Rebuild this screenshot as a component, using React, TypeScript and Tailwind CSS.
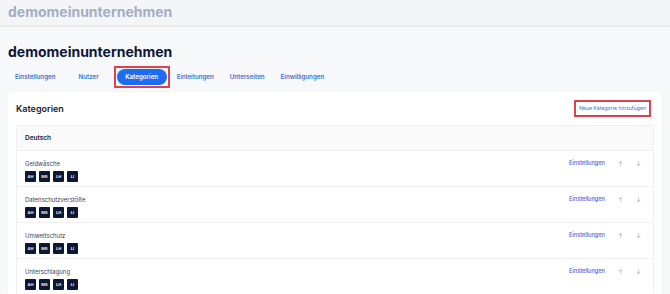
import React from "react";

const rows = ["Geldwäsche", "Datenschutzverstöße", "Umweltschutz", "Unterschlagung"];
const badges = ["AH", "MS", "LH", "LI"];

function Tab({ label, className }: { label: string; className: string }) {
  return <div className={`text-[6.2px] leading-none font-semibold text-[#3a73d6] whitespace-nowrap ${className}`}>{label}</div>;
}

export default function App() {
  return (
    <div className="w-[670px] h-[294px] overflow-hidden bg-[#f7f8fa] font-['Inter',sans-serif]">
      <div className="h-[27px] bg-[#f4f5f7] border-b-2 border-[#e8eaed] flex items-center px-[8px] pb-[2px]">
        <span className="text-[14px] font-bold text-[#a3aec0] leading-none">demomeinunternehmen</span>
      </div>
      <div className="px-[8px] pt-[16px]">
        <h1 className="text-[14px] font-bold text-[#0d1634] leading-[18px]">demomeinunternehmen</h1>
        <div className="flex items-center mt-[5px] h-[22px]">
          <Tab label="Einstellungen" className="ml-[7px]" />
          <Tab label="Nutzer" className="ml-[23px]" />
          <div className="ml-[15px] border-2 border-[#e0424d] px-[1px] py-[1px] h-[22px] flex items-center">
            <div className="bg-[#1d6cf2] text-white rounded-full h-[16px] w-[50px] flex items-center justify-center text-[6.2px] leading-none font-semibold">
              Kategorien
            </div>
          </div>
          <Tab label="Einleitungen" className="ml-[7px]" />
          <Tab label="Unterseiten" className="ml-[16px]" />
          <Tab label="Einwilligungen" className="ml-[16px]" />
        </div>
        <div className="mt-[4px] bg-white rounded-[4px] shadow-[0_0_2px_rgba(0,0,0,0.06)] px-[8px] pt-[8px]">
          <div className="flex items-center justify-between h-[17px]">
            <span className="text-[9px] leading-none font-semibold text-[#1b2232]">Kategorien</span>
            <div className="border-2 border-[#e0424d] h-[17px] w-[77px] flex items-center justify-center mr-[3px]">
              <span className="text-[5.2px] leading-none text-[#3a73d6] whitespace-nowrap">Neue Kategorie hinzufügen</span>
            </div>
          </div>
          <div className="mt-[8px] border border-[#eef0f2] rounded-[3px]">
            <div className="h-[25px] bg-[#fafafa] border-b border-[#eef0f2] flex items-center px-[8px]">
              <span className="text-[6.5px] leading-none font-semibold text-[#1b2232]">Deutsch</span>
            </div>
            {rows.map((r) => (
              <div key={r} className="h-[36px] border-b border-[#eef0f2] flex items-start justify-between px-[8px] pt-[9px]">
                <div className="flex flex-col">
                  <span className="text-[6px] text-[#3b4256] leading-[7px]">{r}</span>
                  <div className="flex gap-[3px] mt-[4px]">
                    {badges.map((b) => (
                      <div key={b} className="w-[11px] h-[11px] rounded-[1px] bg-[#0d1634] text-white text-[4px] leading-none font-semibold flex items-center justify-center">
                        {b}
                      </div>
                    ))}
                  </div>
                </div>
                <div className="flex items-center h-[7px] mr-[4px]">
                  <span className="text-[5.6px] leading-none text-[#5660d8] font-medium whitespace-nowrap">Einstellungen</span>
                  <span className="text-[6px] leading-none text-[#9aa0ae] ml-[13px]">↑</span>
                  <span className="text-[6px] leading-none text-[#9aa0ae] ml-[13px]">↓</span>
                </div>
              </div>
            ))}
          </div>
        </div>
      </div>
    </div>
  );
}
